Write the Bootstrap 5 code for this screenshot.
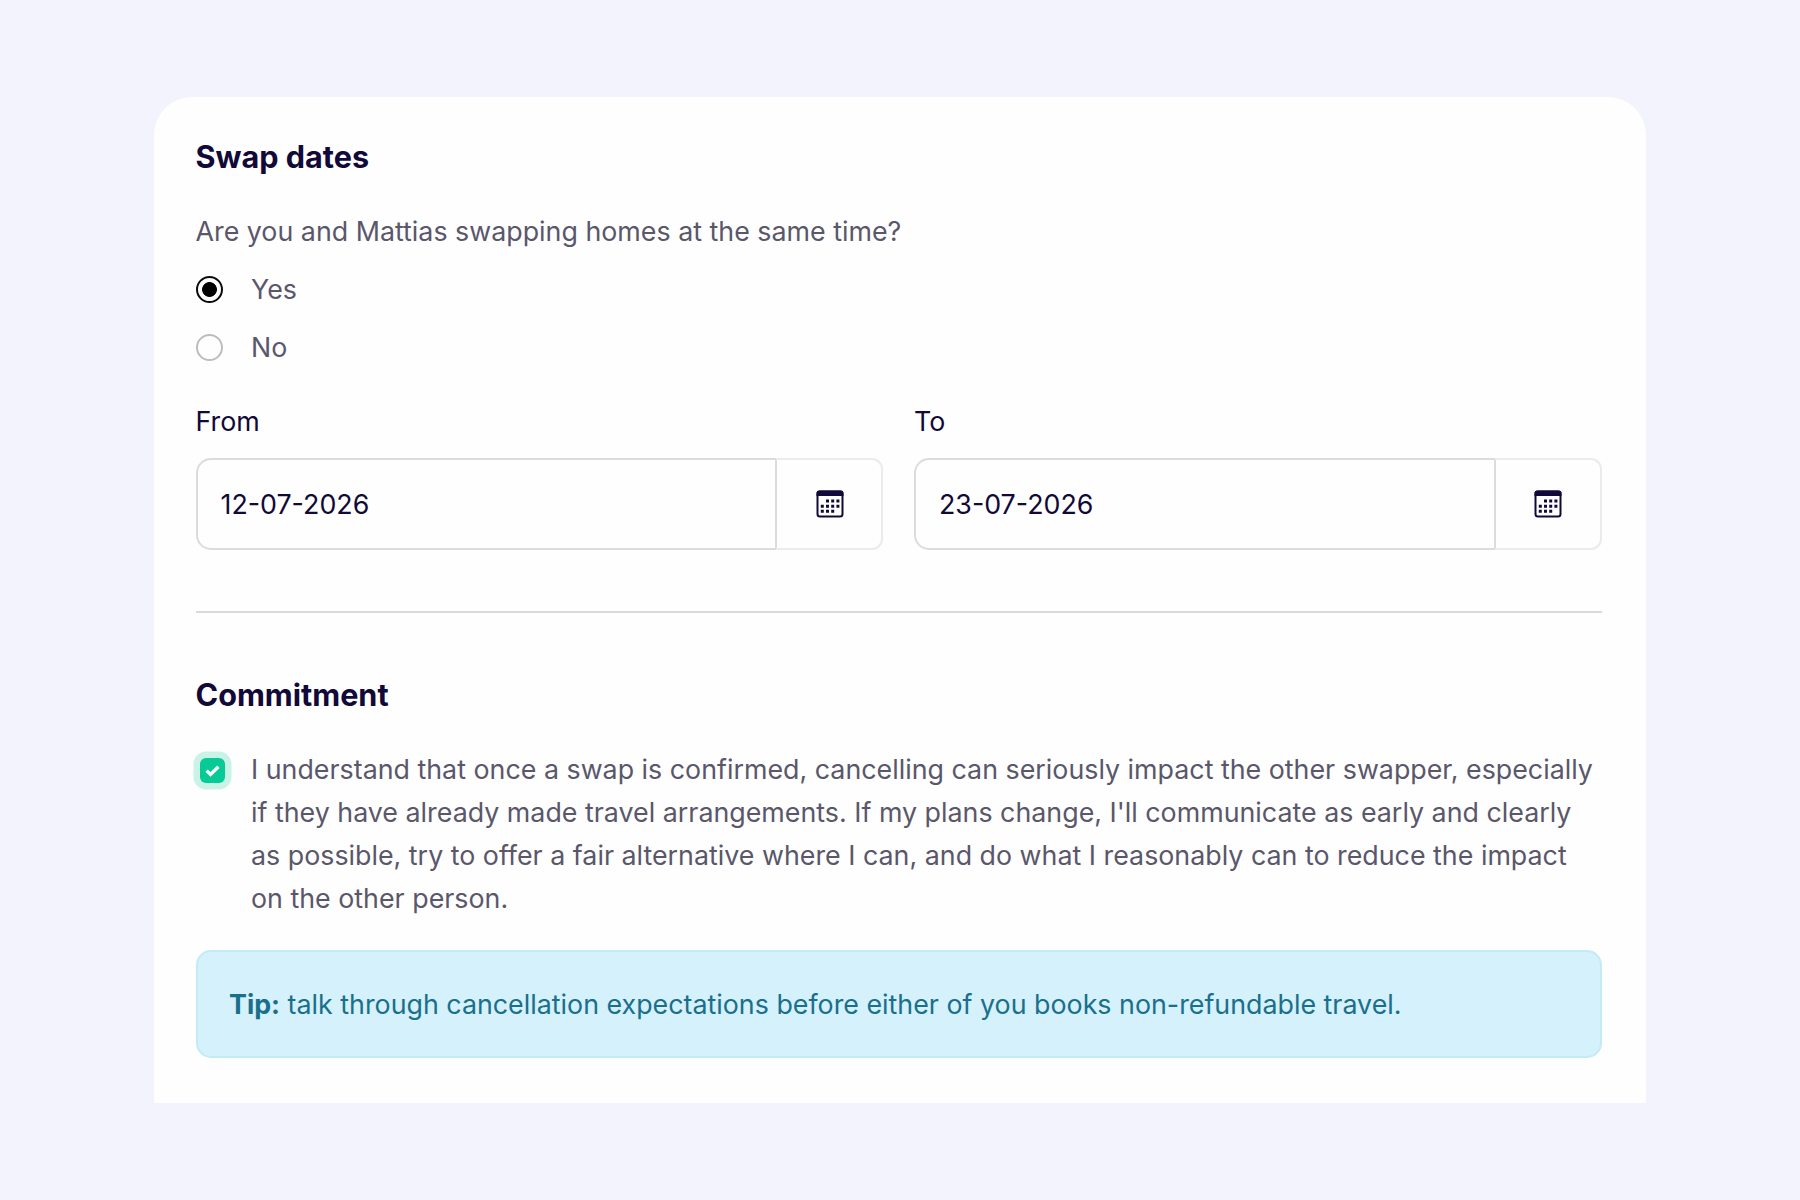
<!DOCTYPE html>
<html lang="en">
<head>
<meta charset="utf-8">
<meta name="viewport" content="width=device-width, initial-scale=1">
<title>Swap dates</title>
<link href="https://cdn.jsdelivr.net/npm/bootstrap@5.3.0/dist/css/bootstrap.min.css" rel="stylesheet">
<style>
body{background:#f2f3fc;font-family:Inter,"Liberation Sans",sans-serif;font-size:26.82px;line-height:42.9px;color:#5a576b;height:1200px;overflow:hidden}
.swap-panel{width:1492px;height:1006px;margin:97px 0 0 154px;padding:42px 44.5px 0 41.5px;background:#fefefe;border-radius:38px 38px 0 0}
.panel-title{font-size:30.6px;line-height:36px;font-weight:700;color:#110938;margin:0}
.question{margin:35px 0 7px}
.choice{height:58.5px;padding:0;margin:0;gap:28.5px}
.choice .form-check-input{width:27px;height:27px;margin:0;float:none;border:2px solid #bdbdbf;background:none}
.choice .form-check-input:checked{border-color:#0b0b0d;background:radial-gradient(circle,#000 0 7px,transparent 7.8px)}
.dates{--bs-gutter-x:31px;margin-top:23.5px}
.dates .form-label{color:#110938;margin-bottom:14.6px;display:block}
.date-group{height:92px}
.date-group .form-control{border:2px solid #dcdce0;border-radius:15px 0 0 15px;font-size:26.8px;color:#110938;padding:0 23px;background:#fefefe}
.date-group .btn{width:107px;border:2px solid #ebebee;border-left:0;border-radius:0 11px 11px 0;padding:0 0 0 2px}
.date-group svg{display:block;margin:auto}
.rule{height:2px;background:#dadadd;margin:61.4px 0 63.8px}
.agree{margin-top:35px;gap:26.5px}
.agree .form-check-input{width:25px;height:25px;margin:10.4px 0 0 4px;border:0;border-radius:6px;background-color:#08ca96;box-shadow:0 0 0 6.5px #c9f3e6;background-size:19px 19px;background-image:url("data:image/svg+xml,%3csvg xmlns='http://www.w3.org/2000/svg' viewBox='0 0 17 17'%3e%3cpath d='M3.2 8.6 6.7 12 13.8 5.2' fill='none' stroke='%23fff' stroke-width='3'/%3e%3c/svg%3e")}
.tip{margin:30.6px 0 0;height:108px;padding:0 31.500px;border:2px solid #c3ebf5;border-radius:15px;background:#d5f1fb;color:#196f8c}
</style>
</head>
<body>
<main class="swap-panel">
  <h2 class="panel-title">Swap dates</h2>
  <p class="question">Are you and Mattias swapping homes at the same time?</p>
  <div class="form-check choice d-flex align-items-center">
    <input class="form-check-input" type="radio" name="same" id="yes" checked><label for="yes">Yes</label>
  </div>
  <div class="form-check choice d-flex align-items-center">
    <input class="form-check-input" type="radio" name="same" id="no"><label for="no">No</label>
  </div>
  <div class="row dates">
    <div class="col-6">
      <label class="form-label p-0" for="from">From</label>
      <div class="input-group date-group">
        <input class="form-control" id="from" value="12-07-2026">
        <button class="btn" type="button" aria-label="Choose start date">
          <svg width="28" height="28" viewBox="0 0 28 28"><rect x="1.5" y="1.5" width="25" height="25" rx="2.5" fill="none" stroke="#110938" stroke-width="2"/><path d="M.5 6V3Q.5.5 3 .5H25Q27.500.5 27.500 3V6Z" fill="#110938"/><path d="M10 11h3M15.200 11h3M20.400 11h3M4.800 16.200h3M10 16.200h3M15.200 16.200h3M20.400 16.200h3M4.800 21.200h3M10 21.200h3M15.200 21.200h3" stroke="#110938" stroke-width="3"/></svg>
        </button>
      </div>
    </div>
    <div class="col-6">
      <label class="form-label p-0" for="to">To</label>
      <div class="input-group date-group">
        <input class="form-control" id="to" value="23-07-2026">
        <button class="btn" type="button" aria-label="Choose end date">
          <svg width="28" height="28" viewBox="0 0 28 28"><rect x="1.5" y="1.5" width="25" height="25" rx="2.5" fill="none" stroke="#110938" stroke-width="2"/><path d="M.5 6V3Q.5.5 3 .5H25Q27.500.5 27.500 3V6Z" fill="#110938"/><path d="M10 11h3M15.200 11h3M20.400 11h3M4.800 16.200h3M10 16.200h3M15.200 16.200h3M20.400 16.200h3M4.800 21.200h3M10 21.200h3M15.200 21.200h3" stroke="#110938" stroke-width="3"/></svg>
        </button>
      </div>
    </div>
  </div>
  <div class="rule"></div>
  <h2 class="panel-title">Commitment</h2>
  <div class="agree d-flex">
    <input class="form-check-input flex-shrink-0" type="checkbox" id="agree" checked>
    <label for="agree" class="text-nowrap">I understand that once a swap is confirmed, cancelling can seriously impact the other swapper, especially<br>if they have already made travel arrangements. If my plans change, I'll communicate as early and clearly<br>as possible, try to offer a fair alternative where I can, and do what I reasonably can to reduce the impact<br>on the other person.</label>
  </div>
  <div class="alert tip d-flex align-items-center"><div><strong>Tip:</strong> talk through cancellation expectations before either of you books non-refundable travel.</div></div>
</main>
<script src="https://cdn.jsdelivr.net/npm/bootstrap@5.3.0/dist/js/bootstrap.bundle.min.js"></script>
</body>
</html>
